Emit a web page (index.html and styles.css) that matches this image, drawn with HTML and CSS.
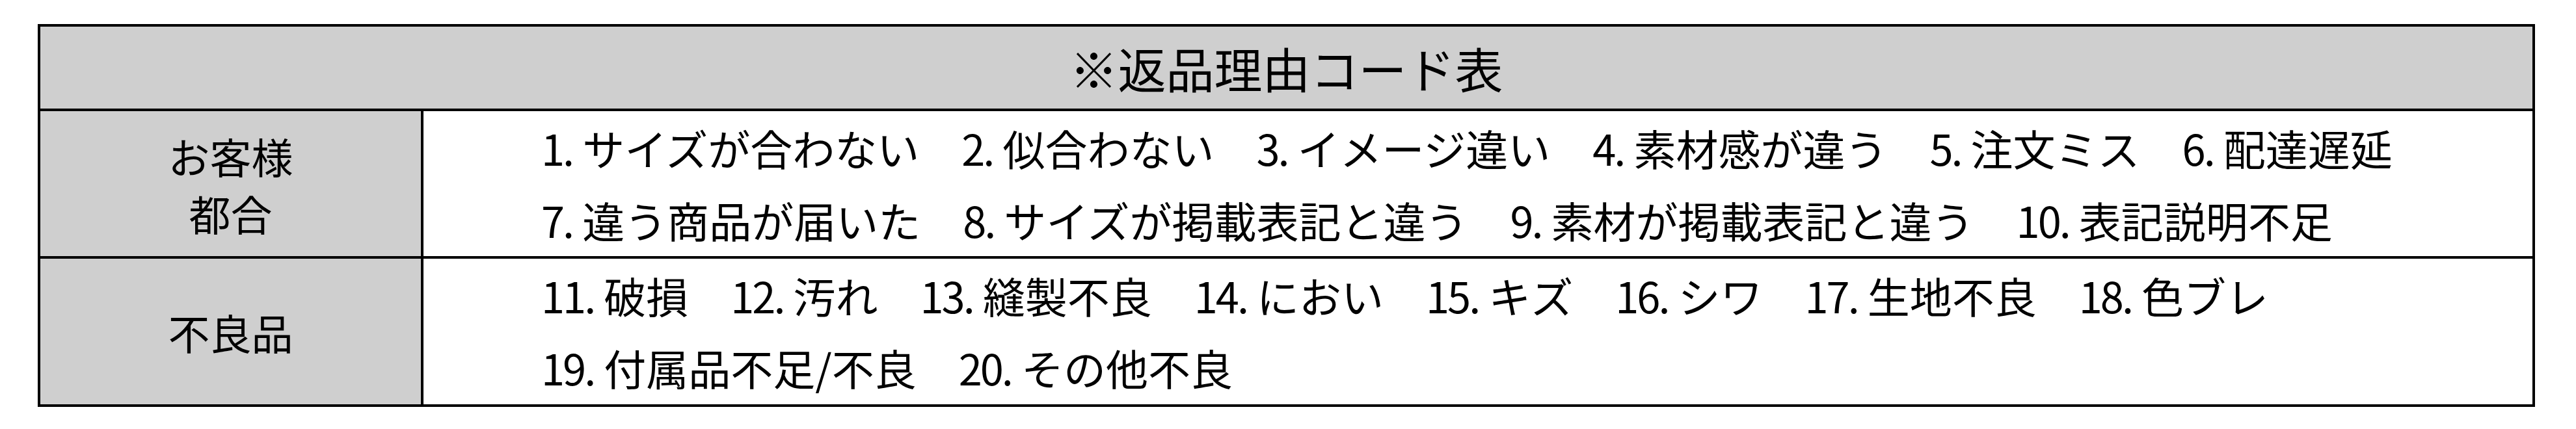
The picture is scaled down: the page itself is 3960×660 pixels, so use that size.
FILE: index.html
```html
<!DOCTYPE html>
<html lang="ja">
<head>
<meta charset="utf-8">
<title>返品理由コード表</title>
<link rel="stylesheet" href="styles.css">
</head>
<body>
<div class="code-table">
  <div class="title">※返品理由コード表</div>
  <div class="label row-first"><span>お客様</span><span>都合</span></div>
  <div class="items row-first">
    <div class="line">
      <span><span class="no">1.</span>サイズが合わない</span>
      <span><span class="no">2.</span>似合わない</span>
      <span><span class="no">3.</span>イメージ違い</span>
      <span><span class="no">4.</span>素材感が違う</span>
      <span><span class="no">5.</span>注文ミス</span>
      <span><span class="no">6.</span>配達遅延</span>
    </div>
    <div class="line">
      <span><span class="no">7.</span>違う商品が届いた</span>
      <span><span class="no">8.</span>サイズが掲載表記と違う</span>
      <span><span class="no">9.</span>素材が掲載表記と違う</span>
      <span><span class="no">10.</span>表記説明不足</span>
    </div>
  </div>
  <div class="label"><span>不良品</span></div>
  <div class="items">
    <div class="line">
      <span><span class="no">11.</span>破損</span>
      <span><span class="no">12.</span>汚れ</span>
      <span><span class="no">13.</span>縫製不良</span>
      <span><span class="no">14.</span>におい</span>
      <span><span class="no">15.</span>キズ</span>
      <span><span class="no">16.</span>シワ</span>
      <span><span class="no">17.</span>生地不良</span>
      <span><span class="no">18.</span>色ブレ</span>
    </div>
    <div class="line">
      <span><span class="no">19.</span>付属品不足/不良</span>
      <span><span class="no">20.</span>その他不良</span>
    </div>
  </div>
</div>
</body>
</html>
```

FILE: styles.css
```css
html, body {
  margin: 0;
  padding: 0;
  background: #ffffff;
}

body {
  padding: 37px 0 0 58px;
  font-family: "Noto Sans CJK JP", "Noto Sans", sans-serif;
  color: #000000;
}

.code-table {
  box-sizing: border-box;
  width: 3839px;
  display: grid;
  grid-template-columns: 589px 1fr;
  grid-template-rows: 130px 227px 224px;
  border: 4px solid #000000;
}

.title {
  grid-column: 1 / 3;
  background: #cfcfcf;
  border-bottom: 4px solid #000000;
  display: flex;
  align-items: center;
  justify-content: center;
  font-size: 74px;
  line-height: 1;
}

.label {
  background: #cfcfcf;
  border-right: 4px solid #000000;
  display: flex;
  flex-direction: column;
  align-items: center;
  justify-content: center;
  font-size: 64px;
  line-height: 88px;
}

.row-first {
  border-bottom: 4px solid #000000;
}

.items {
  display: flex;
  flex-direction: column;
  justify-content: center;
  padding-left: 181px;
  font-size: 65px;
  line-height: 111px;
}

.line {
  display: flex;
  gap: 65px;
  white-space: nowrap;
}

.no {
  letter-spacing: -3px;
  padding-right: 15px;
}
```
